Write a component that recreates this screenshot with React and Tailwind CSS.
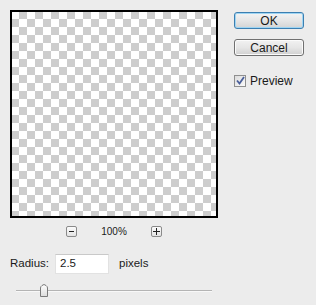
import React from 'react';

const checker = {
  backgroundImage: 'repeating-conic-gradient(#cdcdcd 0 25%, #ffffff 0 50%)',
};

const SmallBox = ({ children }) => (
  <div className="w-[11px] h-[11px] border border-[#8a8a8a] rounded-[2px] bg-gradient-to-b from-[#fbfbfb] to-[#e4e4e4] flex items-center justify-center">
    {children}
  </div>
);

const App = () => {
  return (
    <div
      className="w-[316px] h-[305px] bg-[#ececec] flex text-[#1a1a1a] overflow-hidden"
      style={{ fontFamily: '"Liberation Sans", Arial, sans-serif' }}
    >
      {/* left: preview, zoom, radius */}
      <div className="ml-[10px] mt-[10px] w-[208px] flex flex-col">
        <div
          className="w-[208px] h-[208px] border-2 border-black bg-[length:16px_16px] bg-[position:-1px_-1px]"
          style={checker}
        />

        <div className="mt-[8px] flex items-center justify-center gap-[24px] h-[11px]">
          <SmallBox>
            <div className="w-[5px] h-[1px] bg-[#222]" />
          </SmallBox>
          <span className="text-[10px] leading-none">100%</span>
          <SmallBox>
            <div className="relative w-[7px] h-[7px]">
              <div className="absolute left-0 top-[3px] w-[7px] h-[1px] bg-[#222]" />
              <div className="absolute left-[3px] top-0 w-[1px] h-[7px] bg-[#222]" />
            </div>
          </SmallBox>
        </div>

        <div className="mt-[17px] flex items-center text-[11.5px]">
          <span>Radius:</span>
          <div className="ml-[6px] w-[54px] h-[20px] bg-white border border-[#e2e2e2] border-t-[#c9c9c9] flex items-center pl-[4px]">
            2.5
          </div>
          <span className="ml-[10px]">pixels</span>
        </div>

        <div className="mt-[10px] ml-[6px] w-[196px] h-[13px] flex items-center relative">
          <div className="w-full h-[2px] bg-[#b4b4b4] border-b border-[#f8f8f8]" />
          <svg
            className="absolute left-[24px] top-0"
            width="8"
            height="13"
            viewBox="0 0 8 13"
          >
            <defs>
              <linearGradient id="tg" x1="0" y1="0" x2="0" y2="1">
                <stop offset="0" stopColor="#ffffff" />
                <stop offset="1" stopColor="#dcdcdc" />
              </linearGradient>
            </defs>
            <path
              d="M0.5 12.5 V4 Q0.5 2.5 2 1.5 L4 0.5 L6 1.5 Q7.5 2.5 7.5 4 V12.5 Z"
              fill="url(#tg)"
              stroke="#7a7a7a"
            />
          </svg>
        </div>
      </div>

      {/* right: buttons */}
      <div className="ml-[16px] mt-[12px] flex flex-col w-[70px]">
        <button className="h-[17px] w-[70px] border border-[#3c7fb1] rounded-[3px] bg-gradient-to-b from-[#f4f4f4] via-[#e6e6e6] to-[#d4d4d4] text-[12px] leading-none shadow-[inset_0_0_0_1px_#9fd5f3]">
          OK
        </button>
        <button className="mt-[10px] h-[17px] w-[70px] border border-[#707070] rounded-[3px] bg-gradient-to-b from-[#f2f2f2] via-[#e6e6e6] to-[#d0d0d0] text-[12px] leading-none shadow-[inset_0_0_0_1px_#fbfbfb]">
          Cancel
        </button>
        <div className="mt-[18px] flex items-center h-[13px]">
          <div className="w-[12px] h-[12px] border border-[#8f8f8f] bg-gradient-to-br from-[#dcdcdc] to-[#fafafa] flex items-center justify-center">
            <svg width="9" height="9" viewBox="0 0 9 9">
              <path
                d="M1 4.5 L3.5 7.5 L8 1"
                fill="none"
                stroke="#4a5f9a"
                strokeWidth="1.8"
              />
            </svg>
          </div>
          <span className="ml-[4px] text-[12px]">Preview</span>
        </div>
      </div>
    </div>
  );
};

export default App;
